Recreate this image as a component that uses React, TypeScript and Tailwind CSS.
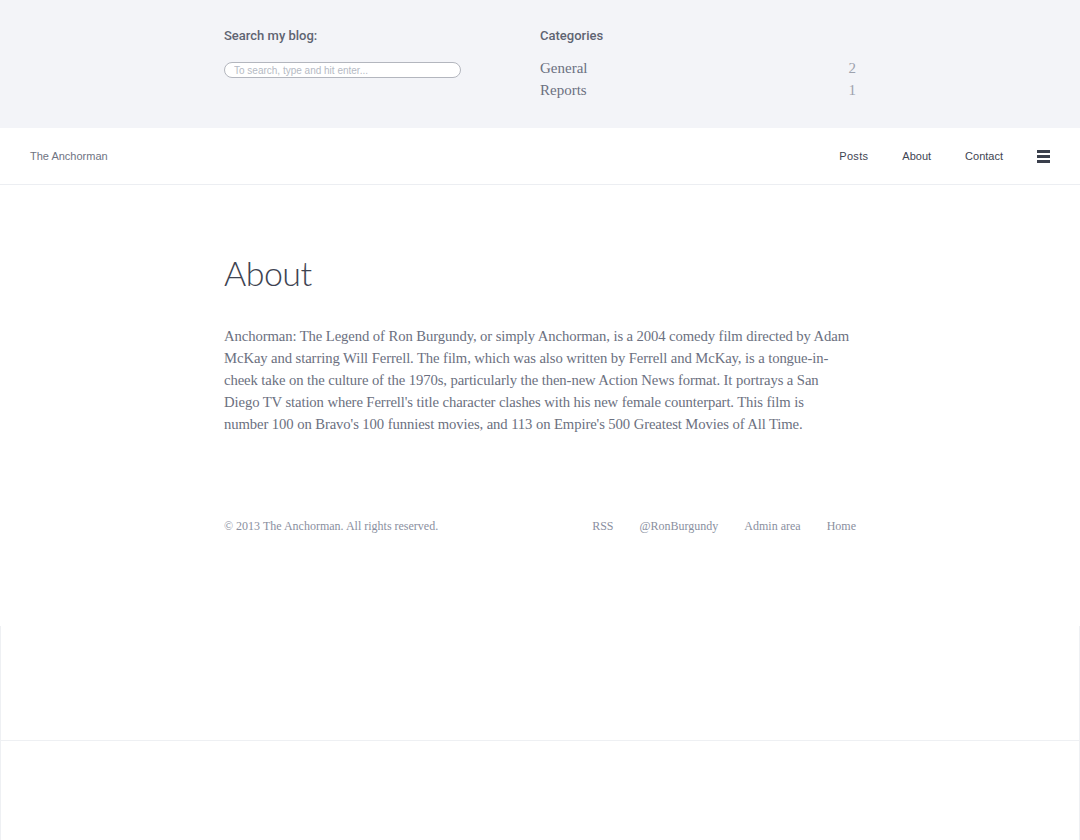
const sans = "font-['Liberation_Sans',Arial,sans-serif]";
const serif = "font-['Liberation_Serif','Times_New_Roman',serif]";

function TopPanel() {
  return (
    <div className="bg-[#f3f4f8] h-[128px] pt-[28px]">
      <div className="w-[632px] mx-auto flex">
        <div className="w-1/2">
          <h3 className="font-['Roboto',sans-serif] text-[13px] font-medium text-[#5f6472] leading-[16px]">Search my blog:</h3>
          <input
            className={`${sans} mt-[18px] w-[237px] h-[16px] rounded-full border border-[#b3b6be] bg-white px-[9px] text-[10px] text-[#aab0bb] placeholder:text-[#b5bac4] outline-none`}
            placeholder="To search, type and hit enter..."
          />
        </div>
        <div className="w-1/2">
          <h3 className="font-['Roboto',sans-serif] text-[13px] font-medium text-[#5f6472] leading-[16px]">Categories</h3>
          <ul className={`${serif} mt-[13px] text-[15px] leading-[22px] text-[#6b7080]`}>
            <li className="flex justify-between"><span>General</span><span className="text-[#9da2ae]">2</span></li>
            <li className="flex justify-between"><span>Reports</span><span className="text-[#9da2ae]">1</span></li>
          </ul>
        </div>
      </div>
    </div>
  );
}

function Header() {
  return (
    <header className={`${sans} h-[57px] bg-white border-b border-[#eceef2] flex items-center justify-between pl-[30px] pr-[30px] text-[11px]`}>
      <span className="text-[#6e7382]">The Anchorman</span>
      <nav className="flex items-center text-[#3e4452]">
        <span className="mr-[34px] tracking-[0.3px]">Posts</span>
        <span className="mr-[34px]">About</span>
        <span className="mr-[34px]">Contact</span>
        <span className="flex flex-col gap-[2px] w-[13px]">
          <span className="h-[3px] bg-[#3a3f4c]" />
          <span className="h-[3px] bg-[#3a3f4c]" />
          <span className="h-[3px] bg-[#3a3f4c]" />
        </span>
      </nav>
    </header>
  );
}

export default function App() {
  return (
    <div className="bg-white min-h-[840px]">
      <TopPanel />
      <Header />
      <main className="w-[632px] mx-auto pt-[68px]">
        <h1 className="font-['Lato',sans-serif] font-light text-[34px] leading-[40px] text-[#3e4452] tracking-[-0.5px]">About</h1>
        <p className={`${serif} mt-[32px] w-[627px] text-[14.7px] leading-[22px] tracking-[-0.1px] text-[#6b7080]`}>
          Anchorman: The Legend of Ron Burgundy, or simply Anchorman, is a 2004 comedy film directed by Adam McKay and starring Will Ferrell. The film, which was also written by Ferrell and McKay, is a tongue-in-cheek take on the culture of the 1970s, particularly the then-new Action News format. It portrays a San Diego TV station where Ferrell's title character clashes with his new female counterpart. This film is number 100 on Bravo's 100 funniest movies, and 113 on Empire's 500 Greatest Movies of All Time.
        </p>
        <footer className={`${serif} mt-[82px] flex justify-between text-[12px] text-[#8a8fa0]`}>
          <span>© 2013 The Anchorman. All rights reserved.</span>
          <span className="flex gap-[26px]">
            <span>RSS</span>
            <span>@RonBurgundy</span>
            <span>Admin area</span>
            <span>Home</span>
          </span>
        </footer>
      </main>
      <div className="mt-[91px] h-[115px] border-x border-b border-[#eef0f3]" />
      <div className="h-[100px] border-x border-[#eef0f3]" />
    </div>
  );
}
